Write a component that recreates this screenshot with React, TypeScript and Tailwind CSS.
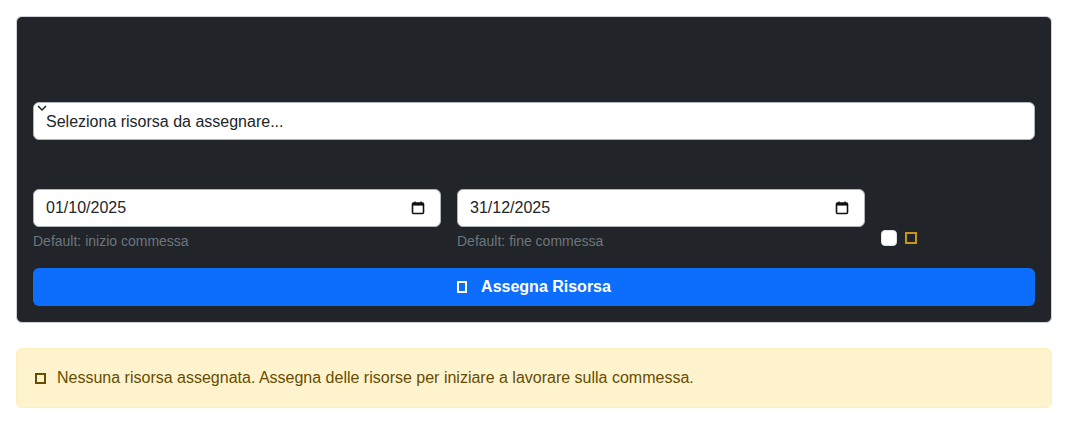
import React from "react";

const Tofu = ({ className }: { className: string }): JSX.Element => (
  <span className={"inline-block box-border " + className} />
);

const CalendarIcon = (): JSX.Element => (
  <svg width="14" height="14" viewBox="0 0 14 14" fill="none">
    <rect x="1.5" y="2" width="11" height="10.5" rx="1" stroke="#111" strokeWidth="1.6" />
    <rect x="1.5" y="2" width="11" height="2.6" fill="#111" />
    <path d="M4 0.6v2M10 0.6v2" stroke="#111" strokeWidth="1.4" />
  </svg>
);

const DateBox = ({ value, hint }: { value: string; hint: string }): JSX.Element => (
  <div className="flex flex-col">
    <div className="flex h-[38px] items-center justify-between rounded-[6px] border border-[#adb5bd] bg-white pl-3 pr-[15px] text-[16px] text-[#212529]">
      <span>{value}</span>
      <CalendarIcon />
    </div>
    <p className="mt-[4px] text-[14px] leading-[20px] text-[#6c757d]">{hint}</p>
  </div>
);

const App = (): JSX.Element => {
  return (
    <div className="min-h-screen bg-white p-4 font-['Liberation_Sans',Arial,sans-serif]">
      <div className="rounded-[6px] border border-[#cfd3d7] bg-[#212529] px-4 pb-4 pt-[85px]">
        <div className="relative flex h-[38px] items-center rounded-[6px] border border-[#adb5bd] bg-white pl-3 text-[16px] text-[#212529]">
          <svg className="absolute left-[3px] top-[2px]" width="10" height="7" viewBox="0 0 10 7" fill="none">
            <path d="M1 1l4 4 4-4" stroke="#222" strokeWidth="1.5" />
          </svg>
          <span className="mt-[2px]">Seleziona risorsa da assegnare...</span>
        </div>

        <div className="mt-[49px] grid grid-cols-[408px_408px_1fr] gap-x-4">
          <DateBox value="01/10/2025" hint="Default: inizio commessa" />
          <DateBox value="31/12/2025" hint="Default: fine commessa" />
          <div className="flex items-end gap-2 pb-[5px]">
            <span className="inline-block h-4 w-4 rounded-[4px] border border-[#dee2e6] bg-white" />
            <Tofu className="mb-[2px] h-[12px] w-[12px] border-2 border-[#c8961f]" />
          </div>
        </div>

        <button className="mt-[17px] flex h-[38px] w-full items-center justify-center gap-[14px] rounded-[6px] bg-[#0d6efd] text-[16px] font-bold text-white">
          <Tofu className="h-[12px] w-[10px] border-2 border-white" />
          <span>Assegna Risorsa</span>
        </button>
      </div>

      <div className="mt-[25px] flex h-[60px] items-center gap-[11px] rounded-[6px] border border-[#ffefbf] bg-[#fff3cd] px-[18px] text-[16px] text-[#664d03]">
        <Tofu className="h-[11px] w-[11px] border-2 border-[#664d03]" />
        <span>Nessuna risorsa assegnata. Assegna delle risorse per iniziare a lavorare sulla commessa.</span>
      </div>
    </div>
  );
};

export default App;
